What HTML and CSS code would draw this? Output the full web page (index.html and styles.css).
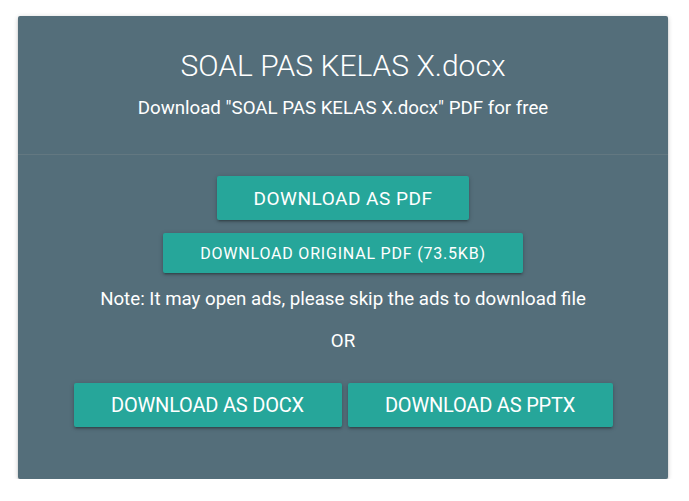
FILE: index.html
```html
<!DOCTYPE html>
<html>
<head>
<meta charset="utf-8">
<link rel="stylesheet" href="styles.css">
</head>
<body>
<div class="card">
  <div class="card-head">
    <h1 class="title">SOAL PAS KELAS X.docx</h1>
    <p class="subtitle">Download "SOAL PAS KELAS X.docx" PDF for free</p>
  </div>
  <div class="card-body">
    <a class="btn btn-main">DOWNLOAD AS PDF</a>
    <a class="btn btn-orig">DOWNLOAD ORIGINAL PDF (73.5KB)</a>
    <p class="note">Note: It may open ads, please skip the ads to download file</p>
    <p class="or">OR</p>
    <div class="btn-row">
      <a class="btn btn-alt btn-docx">DOWNLOAD AS DOCX</a>
      <a class="btn btn-alt btn-pptx">DOWNLOAD AS PPTX</a>
    </div>
  </div>
</div>
</body>
</html>
```
FILE: styles.css
```css
html, body {
  margin: 0;
  padding: 0;
  background: #ffffff;
}
body {
  padding: 16px 0 0 18px;
  font-family: Roboto, "Liberation Sans", sans-serif;
  color: #ffffff;
}
.card {
  width: 650px;
  height: 463px;
  background: #546e7a;
  border-radius: 2px;
  box-shadow: 0 2px 2px 0 rgba(0,0,0,.14), 0 3px 1px -2px rgba(0,0,0,.12), 0 1px 5px 0 rgba(0,0,0,.2);
  display: flex;
  flex-direction: column;
}
.card-head {
  padding: 30px 0 34px;
  display: flex;
  flex-direction: column;
  align-items: center;
  border-bottom: 1px solid rgba(160,160,160,0.2);
}
.title {
  margin: 0;
  font-weight: 300;
  font-size: 30px;
  line-height: 40px;
}
.subtitle {
  margin: 10px 0 0;
  font-size: 18.7px;
  line-height: 24px;
}
.card-body {
  padding-top: 21px;
  display: flex;
  flex-direction: column;
  align-items: center;
}
.btn {
  display: flex;
  align-items: center;
  justify-content: center;
  background: #26a69a;
  color: #ffffff;
  border-radius: 2px;
  box-shadow: 0 2px 2px 0 rgba(0,0,0,.14), 0 3px 1px -2px rgba(0,0,0,.12), 0 1px 5px 0 rgba(0,0,0,.2);
  white-space: nowrap;
}
.btn-main {
  height: 44px;
  padding: 0 37px;
  font-size: 19px;
  letter-spacing: 0.5px;
}
.btn-orig {
  margin-top: 13px;
  height: 40px;
  padding: 0 37px;
  font-size: 16px;
  letter-spacing: 0.8px;
}
.note {
  margin: 14px 0 0;
  font-size: 18.7px;
  line-height: 24px;
}
.or {
  margin: 18px 0 0;
  font-size: 18.7px;
  line-height: 24px;
}
.btn-row {
  margin-top: 30px;
  display: flex;
  gap: 6px;
}
.btn-alt {
  height: 44px;
  font-size: 20px;
  letter-spacing: -0.2px;
}
.btn-docx {
  width: 268px;
}
.btn-pptx {
  width: 265px;
}
```
